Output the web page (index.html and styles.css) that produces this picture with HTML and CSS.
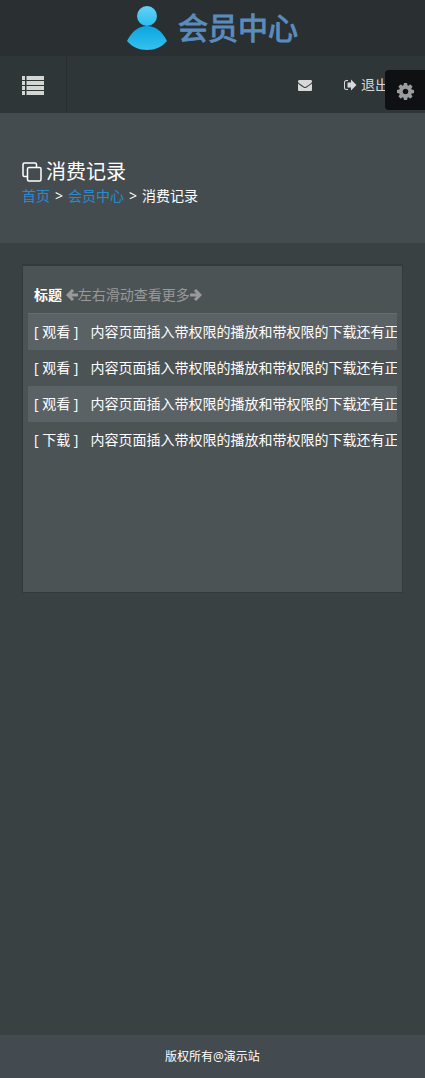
FILE: index.html
```html
<!DOCTYPE html>
<html lang="zh-CN">
<head>
  <meta charset="UTF-8">
  <meta name="viewport" content="width=device-width, initial-scale=1.0">
  <title>消费记录</title>
  <link rel="stylesheet" href="styles.css">
</head>
<body>
  <header class="header">
    <a class="brand" href="#">
      <svg class="brand-icon" viewBox="0 0 40 44" aria-hidden="true">
        <defs>
          <linearGradient id="head" x1="0" y1="0" x2="0" y2="1">
            <stop offset="0" stop-color="#62d2f8"/>
            <stop offset="1" stop-color="#2bbdec"/>
          </linearGradient>
          <linearGradient id="torso" x1="0" y1="0" x2="0" y2="1">
            <stop offset="0" stop-color="#0aa5e2"/>
            <stop offset="1" stop-color="#36c1ee"/>
          </linearGradient>
        </defs>
        <circle cx="20" cy="10" r="10" fill="url(#head)"/>
        <path d="M0 35C5 25 12 20 20 20s15 5 20 15c-5 6-12 9-20 9S5 41 0 35z" fill="url(#torso)"/>
      </svg>
      <span class="brand-name">会员中心</span>
    </a>
  </header>

  <nav class="navbar">
    <button class="menu-toggle" type="button" aria-label="菜单">
      <svg class="icon-list" viewBox="0 0 22 19" aria-hidden="true">
        <path d="M0 0h3v4H0zM4.500 0H22v4H4.500zM0 5h3v4H0zM4.500 5H22v4H4.500zM0 10h3v4H0zM4.500 10H22v4H4.500zM0 15h3v4H0zM4.500 15H22v4H4.500z"/>
      </svg>
    </button>
    <div class="nav-links">
      <a href="#" aria-label="消息">
        <svg class="icon" viewBox="0 0 1792 1792" aria-hidden="true">
          <path d="M1792 710v794q0 66-47 113t-113 47H160q-66 0-113-47T0 1504V710q44 49 101 87 362 246 497 345 57 42 92.500 65.500t94.500 48 110 24.500h2q51 0 110-24.500t94.500-48 92.500-65.500q170-123 498-345 57-39 100-87zm0-294q0 79-49 151t-122 123q-376 261-468 325-10 7-42.500 30.500t-54 38-52 32.500-57.500 27-50 9h-2q-23 0-50-9t-57.500-27-52-32.500-54-38T639 1015q-91-64-262-182.500T172 690q-62-42-117-115.500T0 438q0-78 41.500-130T160 256h1472q65 0 112.500 47t47.500 113z"/>
        </svg>
      </a>
      <a href="#">
        <svg class="icon" viewBox="0 0 14 14" aria-hidden="true">
          <path d="M5 2H3.500A2.500 2.500 0 0 0 1 4.500v5A2.500 2.500 0 0 0 3.500 12H5v-1H3.500A1.500 1.500 0 0 1 2 9.500v-5A1.500 1.500 0 0 1 3.500 3H5zM8 1.500l5.500 5.500L8 12.500V9.500H4.500v-5H8z"/>
        </svg>
        退出
      </a>
    </div>
  </nav>

  <button class="settings" type="button" aria-label="设置">
    <svg viewBox="0 0 1536 1536" aria-hidden="true">
      <path d="M1024 768q0-106-75-181t-181-75-181 75-75 181 75 181 181 75 181-75 75-181zm512-109v222q0 12-8 23t-20 13l-185 28q-19 54-39 91 35 50 107 138 10 12 10 25t-9 23q-27 37-99 108t-94 71q-12 0-26-9l-138-108q-44 23-91 38-16 136-29 186-7 28-36 28H657q-14 0-24.500-8.500T621 1506l-28-184q-49-16-90-37l-141 107q-10 9-25 9-14 0-25-11-126-114-165-168-7-10-7-23 0-12 8-23 15-21 51-66.500t54-70.500q-27-50-41-99L29 913q-13-2-21-12.500T0 877V655q0-12 8-23t19-13l186-28q14-46 39-92-40-57-107-138-10-12-10-24 0-10 9-23 26-36 98.500-107.500T337 135q13 0 26 10l138 107q44-23 91-38 16-136 29-186 7-28 36-28h222q14 0 24.500 8.500T915 30l28 184q49 16 90 37l142-107q9-9 24-9 13 0 25 10 129 119 165 170 7 8 7 22 0 12-8 23-15 21-51 66.500t-54 70.500q26 50 41 98l183 28q13 2 21 12.500t8 23.500z"/>
    </svg>
  </button>

  <section class="page-head">
    <h1>
      <svg class="icon-copy" viewBox="0 0 20 20" aria-hidden="true">
        <path d="M5.500 14.500h-3a1.500 1.500 0 0 1-1.500-1.500V2.500A1.500 1.500 0 0 1 2.500 1H13a1.500 1.500 0 0 1 1.500 1.500v3M7 5.500h10.500A1.500 1.500 0 0 1 19 7v10.500a1.500 1.500 0 0 1-1.500 1.500H7a1.500 1.500 0 0 1-1.500-1.500V7A1.500 1.500 0 0 1 7 5.500z"/>
      </svg>
      消费记录
    </h1>
    <div class="breadcrumb"><a href="#">首页</a><span>&gt;</span><a href="#">会员中心</a><span>&gt;</span>消费记录</div>
  </section>

  <main class="content">
    <div class="panel">
      <div class="table-scroll">
        <table class="records">
          <thead>
            <tr>
              <th>标题 <span class="hint"><svg viewBox="0 0 12 12" aria-hidden="true"><path d="M7 1L2 6l5 5M2.500 6H12"/></svg>左右滑动查看更多<svg viewBox="0 0 12 12" aria-hidden="true"><path d="M5 1l5 5-5 5M9.500 6H0"/></svg></span></th>
            </tr>
          </thead>
          <tbody>
            <tr><td><span class="type">[ 观看 ]</span>内容页面插入带权限的播放和带权限的下载还有正</td></tr>
            <tr><td><span class="type">[ 观看 ]</span>内容页面插入带权限的播放和带权限的下载还有正</td></tr>
            <tr><td><span class="type">[ 观看 ]</span>内容页面插入带权限的播放和带权限的下载还有正</td></tr>
            <tr><td><span class="type">[ 下载 ]</span>内容页面插入带权限的播放和带权限的下载还有正</td></tr>
          </tbody>
        </table>
      </div>
    </div>
  </main>

  <footer class="footer">版权所有@演示站</footer>
</body>
</html>
```
FILE: styles.css
```css
* {
  box-sizing: border-box;
}
body {
  margin: 0;
  min-height: 100vh;
  display: flex;
  flex-direction: column;
  background: #3a4143;
  color: #fff;
  font-family: "Open Sans", "Noto Sans CJK SC", sans-serif;
  font-size: 14px;
  line-height: 20px;
}
a {
  color: #2a8bcc;
  text-decoration: none;
}
button {
  border: 0;
  padding: 0;
  cursor: pointer;
}

/* header */
.header {
  height: 57px;
  display: flex;
  justify-content: center;
  background: #2a2f31;
  border-bottom: 1px solid #303537;
}
.brand {
  display: flex;
  align-items: center;
  gap: 11px;
  color: #5b8cbe;
}
.brand-icon {
  width: 40px;
  height: 44px;
}
.brand-name {
  font-size: 30px;
  line-height: 40px;
  -webkit-text-stroke: 1px #5b8cbe;
}

/* nav */
.navbar {
  height: 56px;
  display: flex;
  justify-content: space-between;
  background: #2f3638;
}
.menu-toggle {
  width: 67px;
  background: none;
  border-right: 1px solid #282d2f;
}
.icon-list {
  width: 22px;
  height: 19px;
  display: block;
  margin: 0 auto;
  fill: #d3d6d3;
}
.nav-links {
  display: flex;
  align-items: center;
  gap: 31px;
  padding-right: 36px;
}
.nav-links a {
  display: flex;
  align-items: center;
  gap: 4px;
  color: #d8d8d8;
}
.icon {
  width: 14px;
  height: 14px;
  fill: #d8d8d8;
}
.settings {
  position: absolute;
  top: 70px;
  right: 0;
  width: 40px;
  height: 40px;
  display: flex;
  align-items: center;
  justify-content: center;
  padding-top: 3px;
  background: #0e1011;
  border-radius: 4px 0 0 4px;
}
.settings svg {
  width: 17px;
  height: 17px;
  fill: #999d9e;
}

/* page title */
.page-head {
  height: 130px;
  padding: 45px 22px 0;
  background: #454c50;
}
.page-head h1 {
  display: flex;
  align-items: center;
  gap: 4px;
  margin: 0;
  font-size: 20px;
  line-height: 28px;
  font-weight: 400;
}
.breadcrumb span {
  padding: 0 5px;
}
.icon-copy {
  width: 20px;
  height: 20px;
  fill: none;
  stroke: #fff;
  stroke-width: 1.5;
}

/* records */
.content {
  flex: 1;
  padding: 21px 22px;
}
.panel {
  min-height: 329px;
  padding: 11px 5px;
  background: #4c5355;
  border: 1px solid #35393c;
  border-top-width: 2px;
}
.table-scroll {
  overflow-x: auto;
  scrollbar-width: none;
}
.records {
  width: 100%;
  border-collapse: collapse;
  white-space: nowrap;
}
.records th,
.records td {
  padding: 8px 6px;
  text-align: left;
}
.records thead {
  border-bottom: 1px solid #666c6f;
}
.records tbody tr:nth-child(odd) {
  background: #5b6265;
}
.hint {
  color: #999;
  font-weight: 400;
}
.hint svg {
  width: 12px;
  height: 12px;
  vertical-align: -1px;
  fill: none;
  stroke: #999;
  stroke-width: 3;
}
.type {
  margin-right: 12px;
}

/* footer */
.footer {
  padding: 12px 22px 11px;
  background: #444b50;
  font-size: 12px;
  text-align: center;
}
```
